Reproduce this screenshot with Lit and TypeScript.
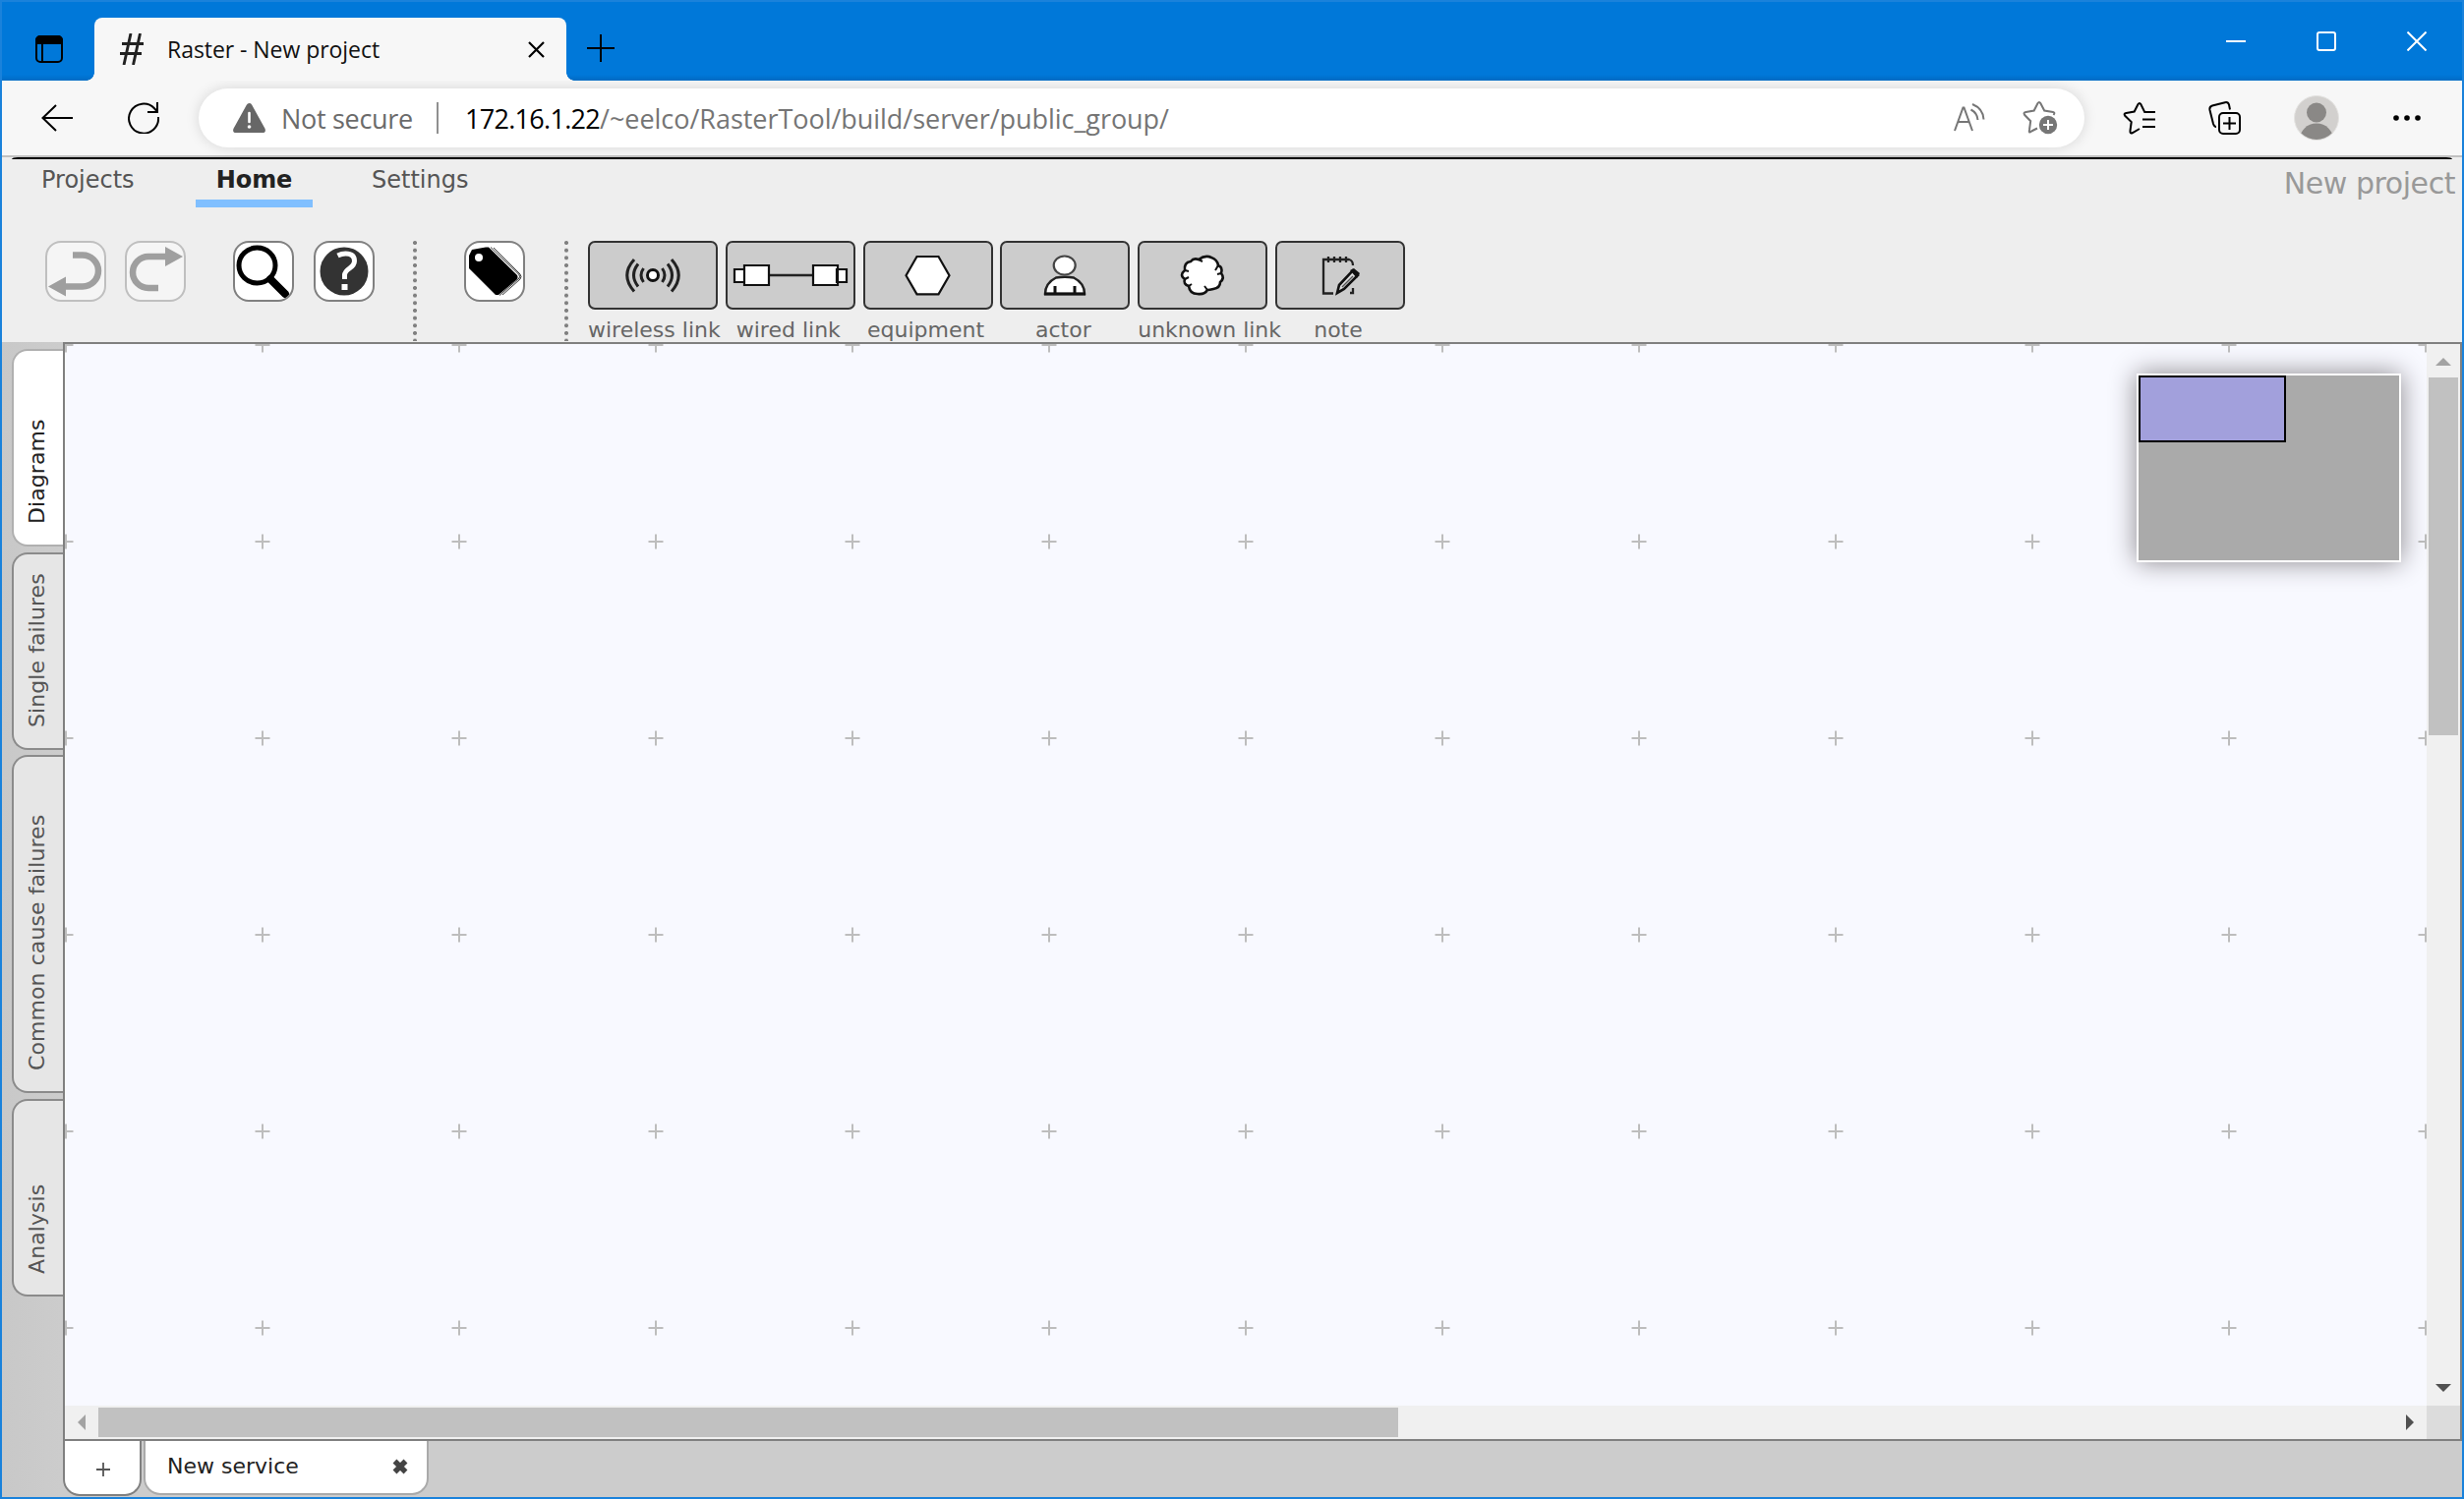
import { LitElement, html, svg, css } from "lit";
import { customElement, state } from "lit/decorators.js";

const stroke = (w: number, h: number, body: unknown, cls = "") => html`
  <svg class="ico ${cls}" width=${w} height=${h} viewBox="0 0 ${w} ${h}" fill="none">${body}</svg>`;

const icons = {
  panel: stroke(28, 28, svg`<rect x="1" y="1" width="26" height="26" rx="4" stroke="#000" stroke-width="2"/><path d="M1 8V5a4 4 0 0 1 4-4h18a4 4 0 0 1 4 4v3zM7 8v19" fill="#000" stroke="#000" stroke-width="2"/>`),
  hash: stroke(24, 32, svg`<path d="M11 0 4 32M20.500 0 13.500 32M2 10.500h22M0 20.500h22" stroke="#222" stroke-width="2.900"/>`),
  close: stroke(17, 17, svg`<path d="M1 1 16 16M16 1 1 16" stroke="#000" stroke-width="2.200"/>`),
  plus: stroke(28, 28, svg`<path d="M14 0V28M0 14H28" stroke="#000" stroke-width="2"/>`),
  back: stroke(32, 28, svg`<path d="M15 1 1.500 14 15 27M2 14H32" stroke="#000" stroke-width="2"/>`),
  reload: stroke(32, 32, svg`<path d="M31 15a15 15 0 1 1-4-8.700L29.500 9M30 0v10H20" stroke="#000" stroke-width="2"/>`),
  warn: stroke(33, 30, svg`<path d="M16.500 0q1.800 0 2.700 1.700L32.600 26q1.200 4-2.600 4H3q-3.800 0-2.600-4L13.800 1.700Q14.700 0 16.500 0z" fill="#676767"/><path d="M16.500 10v9" stroke="#fff" stroke-width="2.600" stroke-linecap="round"/><circle cx="16.500" cy="24" r="1.800" fill="#fff"/>`),
  aloud: stroke(32, 30, svg`<path d="M1 28 9.500 4.500h1L19 28M4 19h12" stroke="#767676" stroke-width="2"/><path d="M17.500 6.500q6.500 3.500 7 10.500M19 1q11 4.500 11.500 15.500" stroke="#767676" stroke-width="2"/>`),
  star: stroke(36, 36, svg`<path d="M9 31.500Q6 34 7 30L8.200 21.200 2 14.800Q.5 12.500 3.500 12L11.700 10.500 15.500 3Q17 .8 18.300 3L22.200 10.500 31 12Q33.500 12.500 31.500 15M9 31.500 15 28.500" stroke="#767676" stroke-width="2"/><circle cx="26" cy="25" r="9.200" fill="#767676"/><path d="M26 20v10M21 25h10" stroke="#fff" stroke-width="2"/>`),
  favs: stroke(34, 34, svg`<path d="M17 28 10 32Q7 33.500 7.500 30L8.700 21 2.200 14.800Q.5 12.500 3.500 12L11.700 10.500 15.500 3Q17 .8 18.300 3L22.200 11H33M20 18.500h13M20 26h13" stroke="#000" stroke-width="2"/>`),
  collect: stroke(34, 34, svg`<path d="M8 26q-2 0-3-3L1.500 9q-.7-3.500 2.500-4.500L17 1.200q3-.7 4 2.300l1 5" stroke="#000" stroke-width="2"/><rect x="11" y="12" width="21" height="21" rx="4" stroke="#000" stroke-width="2"/><path d="M21.500 16v13M15 22.500h13" stroke="#000" stroke-width="2"/>`),
  avatar: stroke(46, 46, svg`<clipPath id="av"><circle cx="23" cy="23" r="22"/></clipPath><circle cx="23" cy="23" r="22.500" fill="#d2d0ce" stroke="#e4e3e1"/><circle cx="23" cy="17.500" r="10" fill="#8a8886"/><circle cx="23" cy="46" r="17.500" fill="#8a8886" clip-path="url(#av)"/>`),
  dots: stroke(28, 8, svg`<circle cx="3" cy="4" r="2.800" fill="#000"/><circle cx="14" cy="4" r="2.800" fill="#000"/><circle cx="25" cy="4" r="2.800" fill="#000"/>`),
  min: stroke(20, 20, svg`<path d="M0 10h20" stroke="#fff" stroke-width="2"/>`),
  max: stroke(20, 20, svg`<rect x="1" y="1" width="18" height="18" rx="2" stroke="#fff" stroke-width="2"/>`),
  winClose: stroke(20, 20, svg`<path d="M.5.5l19 19M19.500.5l-19 19" stroke="#fff" stroke-width="2"/>`),
  undo: stroke(58, 58, svg`<path d="M26 12.500H36a16 16 0 0 1 0 32H18" stroke="#333" stroke-width="6.500"/><path d="M1 44.500 19 34.500v20z" fill="#333"/>`),
  redo: stroke(58, 58, svg`<path d="M32 46H22a16 16 0 0 1 0-32h18" stroke="#333" stroke-width="6.500"/><path d="M57 14 39 4v20z" fill="#333"/>`),
  search: stroke(58, 58, svg`<ellipse cx="22.500" cy="23" rx="18.500" ry="18" stroke="#000" stroke-width="5"/><path d="M36 37 51 52" stroke="#000" stroke-width="8" stroke-linecap="round"/>`),
  help: stroke(58, 58, svg`<circle cx="29" cy="29" r="24.500" fill="#333"/><path d="M22.500 13q4-2 8-2 9 0 9 7.500 0 4-5 7.500-5 3.500-5 7v4" stroke="#fff" stroke-width="5"/><path d="M26.500 42h6v6h-6z" fill="#fff"/>`),
  tag: stroke(58, 58, svg`<path d="M3 13 6 7 20 4.500h3L52 33Q53 35 52 37L33 53H30L3 26z" fill="#000"/><circle cx="13" cy="15" r="4" fill="#fff"/><path d="M25 4.500 54 32.500Q55 34.500 54 36L34 53.500M28 5 55 32Q57 34.500 55 37L37 53" stroke="#000" stroke-width=".8"/>`),
  wireless: stroke(128, 66, svg`<circle cx="64" cy="33" r="5.500" fill="#fff" stroke="#111" stroke-width="3"/><path d="M54.500 26q-5 7 0 14M73.500 26q5 7 0 14M49 21.500q-9 11.500 0 23M79 21.500q9 11.500 0 23M45 17Q30.500 33 45 49.500M83 17q14.500 16 0 32.500" stroke="#222" stroke-width="3"/>`),
  wired: stroke(128, 66, svg`<path d="M42 33h45" stroke="#222" stroke-width="2.400"/><path d="M7 27h10v13H7zM111 27h10v13h-10zM17 23h25v20H17zM87 23h25v20H87z" fill="#fff" stroke="#111" stroke-width="2.200"/>`),
  equipment: stroke(128, 66, svg`<path d="M52.500 14h22l11 19.300-11 19h-22l-11-19z" fill="#fff" stroke="#111" stroke-width="2.200"/>`),
  actor: stroke(128, 66, svg`<path d="M44 52q0-11 11-16.500 9-1.500 18 0Q84 41 84 52z" fill="#fff" stroke="#222" stroke-width="2.500"/><ellipse cx="63.700" cy="23" rx="11" ry="9.500" fill="#fff" stroke="#444" stroke-width="2.200"/><path d="M54 52v-8M74 52v-8M43 52h42" stroke="#111" stroke-width="3"/>`),
  cloud: stroke(128, 66, svg`<path d="M60 17q7-5 13-2 6 2 7 8 5 2 3 8 4 5-1 9 0 6-7 7-4 1-6 1-3 5-10 4-8 0-9-8-6-2-4-7-6-4 0-9-1-8 6-9 3-4 8-2z" fill="#fff" stroke="#111" stroke-width="2.600"/><path d="M60 17l4 2M80 23l-3 5M83 31l-4 1M69 48l-3-4M50 44l3-2M46 37l4-2M46 28l4 1" stroke="#111" stroke-width="2"/>`),
  note: stroke(128, 66, svg`<path d="M57 51.500H47V17H73q4 1 4 6M52 14v6M58 14v6M64 14v6M70 14v6M77 46v5h-3" stroke="#222" stroke-width="2.300"/><path d="M61 51l2-8L77 28l5 5L68 47z" fill="#ddd" stroke="#111" stroke-width="2.600"/><path d="M74 28l4-2 6 5-3 5z" fill="#111"/><path d="M66 45 77 34" stroke="#555" stroke-width="1.500"/>`),
};

@customElement("app-root")
export class AppRoot extends LitElement {
  @state() private shapes = [
    { label: "wireless link", icon: icons.wireless },
    { label: "wired link", icon: icons.wired },
    { label: "equipment", icon: icons.equipment },
    { label: "actor", icon: icons.actor },
    { label: "unknown link", icon: icons.cloud },
    { label: "note", icon: icons.note },
  ];

  @state() private views = [
    { label: "Diagrams", size: "short", active: true },
    { label: "Single failures", size: "short" },
    { label: "Common cause failures", size: "tall" },
    { label: "Analysis", size: "short" },
  ];

  static styles = css`
    :host { display: block; height: 1525px; overflow: hidden; font-family: "DejaVu Sans", sans-serif; }
    * { box-sizing: border-box; }
    .ico { display: block; flex: none; }
    .window { width: 2506px; height: 1525px; border: 2px solid #1a82db; background: #ccc; display: flex; flex-direction: column; overflow: hidden; }
    .ui { font-family: "Open Sans", "Noto Sans", sans-serif; white-space: nowrap; }

    .titlebar { height: 80px; flex: none; background: linear-gradient(#0078d9 74px, #006cc4); display: flex; padding-left: 34px; }
    .titlebar > .ico { margin-top: 34px; }
    .tab { margin: 16px 0 0 32px; width: 480px; height: 64px; background: #f7f7f7; border-radius: 8px 8px 0 0; display: flex; align-items: center; padding: 0 22px 0 26px; position: relative; }
    .tab::before, .tab::after { content: ""; position: absolute; bottom: 0; width: 8px; height: 8px; }
    .tab::before { left: -8px; background: radial-gradient(circle at 0 0, transparent 7.5px, #f7f7f7 8px); }
    .tab::after { right: -8px; background: radial-gradient(circle at 100% 0, transparent 7.5px, #f7f7f7 8px); }
    .tab .title { font-size: 23px; letter-spacing: -0.05px; margin: -1px 0 0 24px; flex: 1; color: #111; }
    .titlebar .add { margin: 33px 0 0 21px; }
    .controls { margin: 30px 36px 0 auto; display: flex; gap: 72px; }

    .addressbar { height: 78px; flex: none; background: #f7f7f7; border-bottom: 2px solid #c1c1c1; display: flex; align-items: center; padding: 0 42px 0 40px; }
    .addressbar .reload { margin-left: 56px; }
    .pill { margin-left: 40px; width: 1918px; height: 60px; border-radius: 30px; background: #fff; box-shadow: 0 0 14px #0002; display: flex; align-items: center; padding: 0 27px 0 35px; }
    .pill .secure { margin-left: 16px; font-size: 27px; color: #6b6b6b; width: 158px; letter-spacing: -0.3px; }
    .pill .bar { width: 2px; height: 32px; background: #909090; }
    .pill .url { margin-left: 27px; flex: 1; font-size: 27px; color: #757575; letter-spacing: -0.04px; }
    .pill .url b { font-weight: 400; color: #000; letter-spacing: -0.7px; }
    .pill .star { margin-left: 38px; }
    .actions { margin-left: 39px; flex: 1; display: flex; align-items: center; justify-content: space-between; }
    .avatar { margin-right: 2px; }

    .ribbon { height: 188px; flex: none; background: #eee; padding: 0 6px 0 10px; display: flex; flex-direction: column; }
    .edge { height: 2px; background: #000; border-radius: 6px 6px 0 0 / 2px 2px 0 0; flex: none; margin-right: 4px; }
    .menu { height: 83px; display: flex; align-items: flex-start; font-size: 24px; color: #555; line-height: 28px; }
    .menu > span { padding: 7px 0 0; }
    .menu .projects { margin-left: 30px; width: 157px; }
    .menu .home { width: 119px; text-align: center; color: #222; font-weight: 700; height: 49px; border-bottom: 8px solid #80bfff; letter-spacing: -0.1px; }
    .menu .settings { margin-left: 60px; }
    .menu .project { margin-left: auto; font-size: 30px; line-height: 34px; color: #999; padding: 8px 1px 0 0; letter-spacing: -0.45px; }
    .tools { height: 103px; display: flex; padding-left: 34px; }
    .btn { width: 62px; height: 62px; flex: none; border: 2px solid #808080; border-radius: 16px; background: #fff; overflow: hidden; padding: 0; margin-right: 19px; }
    .btn.off { opacity: 0.42; }
    .btn.redo { margin-right: 48px; }
    .btn.search { margin-right: 20px; }
    .btn.help { margin-right: 39px; }
    .btn.tag { margin: 0 40px 0 48px; }
    .sep { width: 4px; flex: none; height: 102px; background: radial-gradient(circle, #808080 1.7px, #80808000 2.3px) 0 -1.8px / 4px 7.67px; }
    .shapes { margin-left: 20px; display: flex; gap: 7.8px; }
    .shape { width: 132px; display: flex; flex-direction: column; align-items: flex-start; }
    .shape .face { width: 132px; height: 70px; border: 2px solid #333; border-radius: 7px; background: #ccc; }
    .shape .name { min-width: 128px; text-align: center; white-space: nowrap; font-size: 22px; line-height: 26px; color: #666; margin-top: 8px; }

    .work { flex: 1; min-height: 0; display: flex; background: linear-gradient(90deg, #c8c8c8, #ccc 60px); }
    .views { width: 62px; padding: 7px 0 0 10px; display: flex; flex-direction: column; gap: 5.500px; }
    .view { height: 201px; flex: none; width: 52px; border: 2px solid #8b8b8b; border-right: 0; border-radius: 16px 0 0 16px; background: #e6e6e6; color: #555; }
    .view.tall { height: 344px; }
    .view.active { background: #fff; color: #222; border-color: #b0b0b0; }
    .view span { display: block; height: 100%; width: 49px; writing-mode: vertical-rl; transform: rotate(180deg); font-size: 22px; letter-spacing: 0.08px; line-height: 26px; padding: 21px 11px 0 0; white-space: nowrap; }

    .main { flex: 1; display: flex; flex-direction: column; }
    .stage { width: 2440px; height: 1118px; border: 2px solid #808080; display: grid; grid-template: 1080px 34px / 2402px 34px; position: relative; }
    .grid { background: #f8f9ff; }
    .vbar, .hbar { background: #f0f0f0; display: flex; align-items: center; }
    .vbar { flex-direction: column; padding: 14px 0; }
    .hbar { padding: 0 13px; }
    .vbar .thumb { width: 30px; height: 364px; background: #c1c1c1; margin-top: 12px; }
    .hbar .thumb { height: 30px; width: 1322px; background: #c1c1c1; margin-left: 13px; }
    .vbar .end { margin-top: auto; }
    .hbar .end { margin-left: auto; }
    .corner { background: #dcdcdc; }
    .minimap { position: absolute; left: 2107px; top: 30px; width: 269px; height: 192px; border: 2px solid #fff; background: #aaa; box-shadow: 0 0 25px #8a878c; }
    .viewport { width: 150px; height: 68px; border: 2px solid #000; background: #a2a0dc; }
    .services { display: flex; align-items: flex-start; margin-top: -1px; }
    .newtab { width: 80px; height: 57px; border: 2px solid #808080; border-top: 0; border-radius: 0 0 17px 17px; background: #fff; display: flex; justify-content: center; padding: 23px 0 0 2px; }
    .service { margin-left: 2px; width: 290px; height: 56px; border: 2px solid #aaa; border-top: 0; border-radius: 0 0 17px 17px; background: #fff; display: flex; align-items: center; justify-content: space-between; padding: 0 19px 0 22px; font-size: 22px; color: #222; }
    .service span { margin-top: -2px; }
  `;

  render() {
    return html`
      <div class="window">
        <header class="titlebar ui">
          ${icons.panel}
          <div class="tab">${icons.hash}<span class="title">Raster - New project</span>${icons.close}</div>
          <div class="add">${icons.plus}</div>
          <div class="controls">${icons.min}${icons.max}${icons.winClose}</div>
        </header>
        <div class="addressbar ui">
          ${icons.back}
          <div class="reload">${icons.reload}</div>
          <div class="pill">
            ${icons.warn}
            <span class="secure">Not secure</span>
            <span class="bar"></span>
            <span class="url"><b>172.16.1.22</b>/~eelco/RasterTool/build/server/public_group/</span>
            ${icons.aloud}
            <div class="star">${icons.star}</div>
          </div>
          <div class="actions">${icons.favs}${icons.collect}<div class="avatar">${icons.avatar}</div>${icons.dots}</div>
        </div>
        <section class="ribbon">
          <div class="edge"></div>
          <nav class="menu">
            <span class="projects">Projects</span>
            <span class="home">Home</span>
            <span class="settings">Settings</span>
            <span class="project">New project</span>
          </nav>
          <div class="tools">
            <button class="btn off">${icons.undo}</button>
            <button class="btn off redo">${icons.redo}</button>
            <button class="btn search">${icons.search}</button>
            <button class="btn help">${icons.help}</button>
            <div class="sep"></div>
            <button class="btn tag">${icons.tag}</button>
            <div class="sep"></div>
            <div class="shapes">
              ${this.shapes.map((s) => html`
                <div class="shape"><div class="face">${s.icon}</div><div class="name">${s.label}</div></div>`)}
            </div>
          </div>
        </section>
        <div class="work">
          <nav class="views">
            ${this.views.map((v) => html`<div class="view ${v.size} ${v.active ? "active" : ""}"><span>${v.label}</span></div>`)}
          </nav>
          <div class="main">
            <div class="stage">
              <svg class="grid" width="2402" height="1080">
                <defs>
                  <pattern id="cross" x="-99" y="-99" width="200" height="200" patternUnits="userSpaceOnUse">
                    <path d="M92.500 100h15M100 92.500v15" stroke="#bdbdbd" stroke-width="2"/>
                  </pattern>
                </defs>
                <rect width="2402" height="1080" fill="url(#cross)"/>
              </svg>
              <div class="vbar">
                <svg class="ico" width="16" height="8"><path d="M0 8 8 0l8 8z" fill="#a3a3a3"/></svg>
                <div class="thumb"></div>
                <svg class="ico end" width="16" height="8"><path d="M0 0h16L8 8z" fill="#505050"/></svg>
              </div>
              <div class="hbar">
                <svg class="ico" width="8" height="16"><path d="M8 0v16L0 8z" fill="#a3a3a3"/></svg>
                <div class="thumb"></div>
                <svg class="ico end" width="8" height="16"><path d="M0 0v16l8-8z" fill="#505050"/></svg>
              </div>
              <div class="corner"></div>
              <div class="minimap"><div class="viewport"></div></div>
            </div>
            <div class="services">
              <div class="newtab"><svg class="ico" width="14" height="14"><path d="M7 0v14M0 7h14" stroke="#555" stroke-width="1.800"/></svg></div>
              <div class="service">
                <span>New service</span>
                <svg class="ico" width="16" height="16"><path d="M2.500 2.500l11 11M13.500 2.500l-11 11" stroke="#444" stroke-width="5.500"/></svg>
              </div>
            </div>
          </div>
        </div>
      </div>`;
  }
}
